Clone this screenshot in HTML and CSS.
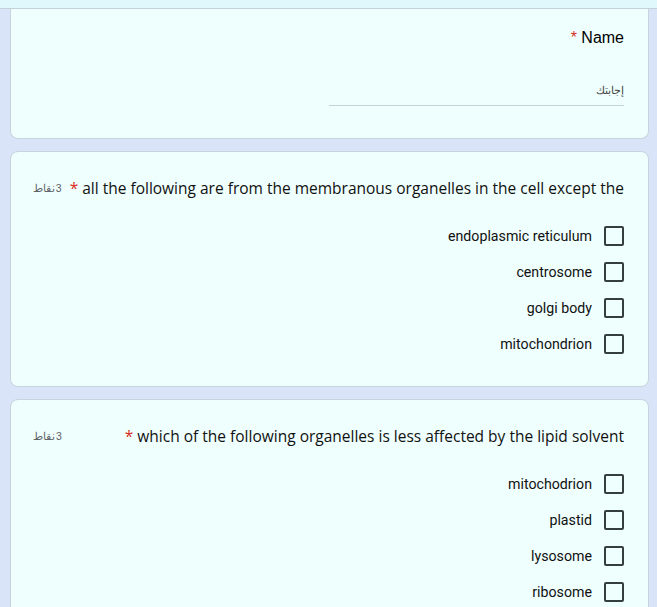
FILE: index.html
```html
<!DOCTYPE html>
<html lang="ar">
<head>
<meta charset="utf-8">
<link rel="stylesheet" href="styles.css">
</head>
<body>
<div class="topbar"></div>
<div class="page">
  <section class="card card-first">
    <div class="name-title"><span class="req">*</span> Name</div>
    <div class="answer">
      <div class="answer-field">إجابتك</div>
    </div>
  </section>

  <section class="card">
    <div class="q-head">
      <div class="q-title"><span class="req">*</span> all the following are from the membranous organelles in the cell except the</div>
      <div class="points">3 نقاط</div>
    </div>
    <div class="options">
      <label class="opt"><span class="opt-label">endoplasmic reticulum</span><span class="box"></span></label>
      <label class="opt"><span class="opt-label">centrosome</span><span class="box"></span></label>
      <label class="opt"><span class="opt-label">golgi body</span><span class="box"></span></label>
      <label class="opt"><span class="opt-label">mitochondrion</span><span class="box"></span></label>
    </div>
  </section>

  <section class="card">
    <div class="q-head">
      <div class="q-title"><span class="req">*</span> which of the following organelles is less affected by the lipid solvent</div>
      <div class="points">3 نقاط</div>
    </div>
    <div class="options">
      <label class="opt"><span class="opt-label">mitochodrion</span><span class="box"></span></label>
      <label class="opt"><span class="opt-label">plastid</span><span class="box"></span></label>
      <label class="opt"><span class="opt-label">lysosome</span><span class="box"></span></label>
      <label class="opt"><span class="opt-label">ribosome</span><span class="box"></span></label>
    </div>
  </section>
</div>
</body>
</html>
```
FILE: styles.css
```css
html, body {
  margin: 0;
  padding: 0;
}
body {
  background: #d9e4f8;
  font-family: "Liberation Sans", Arial, sans-serif;
  color: #202124;
  width: 657px;
  height: 607px;
  overflow: hidden;
}
.topbar {
  height: 8px;
  background: #e0f8fb;
  border-bottom: 1px solid #c3d2d8;
}
.page {
  display: flex;
  flex-direction: column;
  gap: 12px;
  padding: 0 8px 0 10px;
}
.card {
  background: #effffe;
  border: 1px solid #c6d4dc;
  border-radius: 8px;
  padding: 24px 24px 32px 22px;
}
.card-first {
  border-top: none;
  border-top-left-radius: 0;
  border-top-right-radius: 0;
  padding-top: 19px;
  padding-bottom: 32px;
  display: flex;
  flex-direction: column;
  align-items: flex-end;
}
.name-title {
  font-size: 16px;
  line-height: 20px;
  color: #000;
}
.req {
  color: #d93025;
}
.answer {
  margin-top: 35px;
  width: 295px;
  border-bottom: 1px solid #c4d3d8;
  padding-bottom: 8px;
}
.answer-field {
  direction: rtl;
  font-size: 11px;
  line-height: 14px;
  color: #444;
}
.q-head {
  display: flex;
  flex-direction: row-reverse;
  justify-content: space-between;
  align-items: center;
  gap: 8px;
  margin-top: 2px;
}
.q-title {
  font-family: "Open Sans", sans-serif;
  font-size: 15.5px;
  line-height: 20px;
  color: #111;
  white-space: nowrap;
}
.points {
  direction: rtl;
  font-size: 10.5px;
  word-spacing: -2px;
  color: #5f6368;
  white-space: nowrap;
  flex-shrink: 0;
}
.options {
  margin-top: 28px;
  display: flex;
  flex-direction: column;
  gap: 16px;
  align-items: flex-end;
}
.opt {
  display: flex;
  align-items: center;
  gap: 12px;
  height: 20px;
}
.opt-label {
  font-family: Roboto, sans-serif;
  font-size: 14.2px;
  color: #111;
}
.box {
  width: 16px;
  height: 16px;
  border: 2px solid #343d40;
  border-radius: 2px;
}
```
